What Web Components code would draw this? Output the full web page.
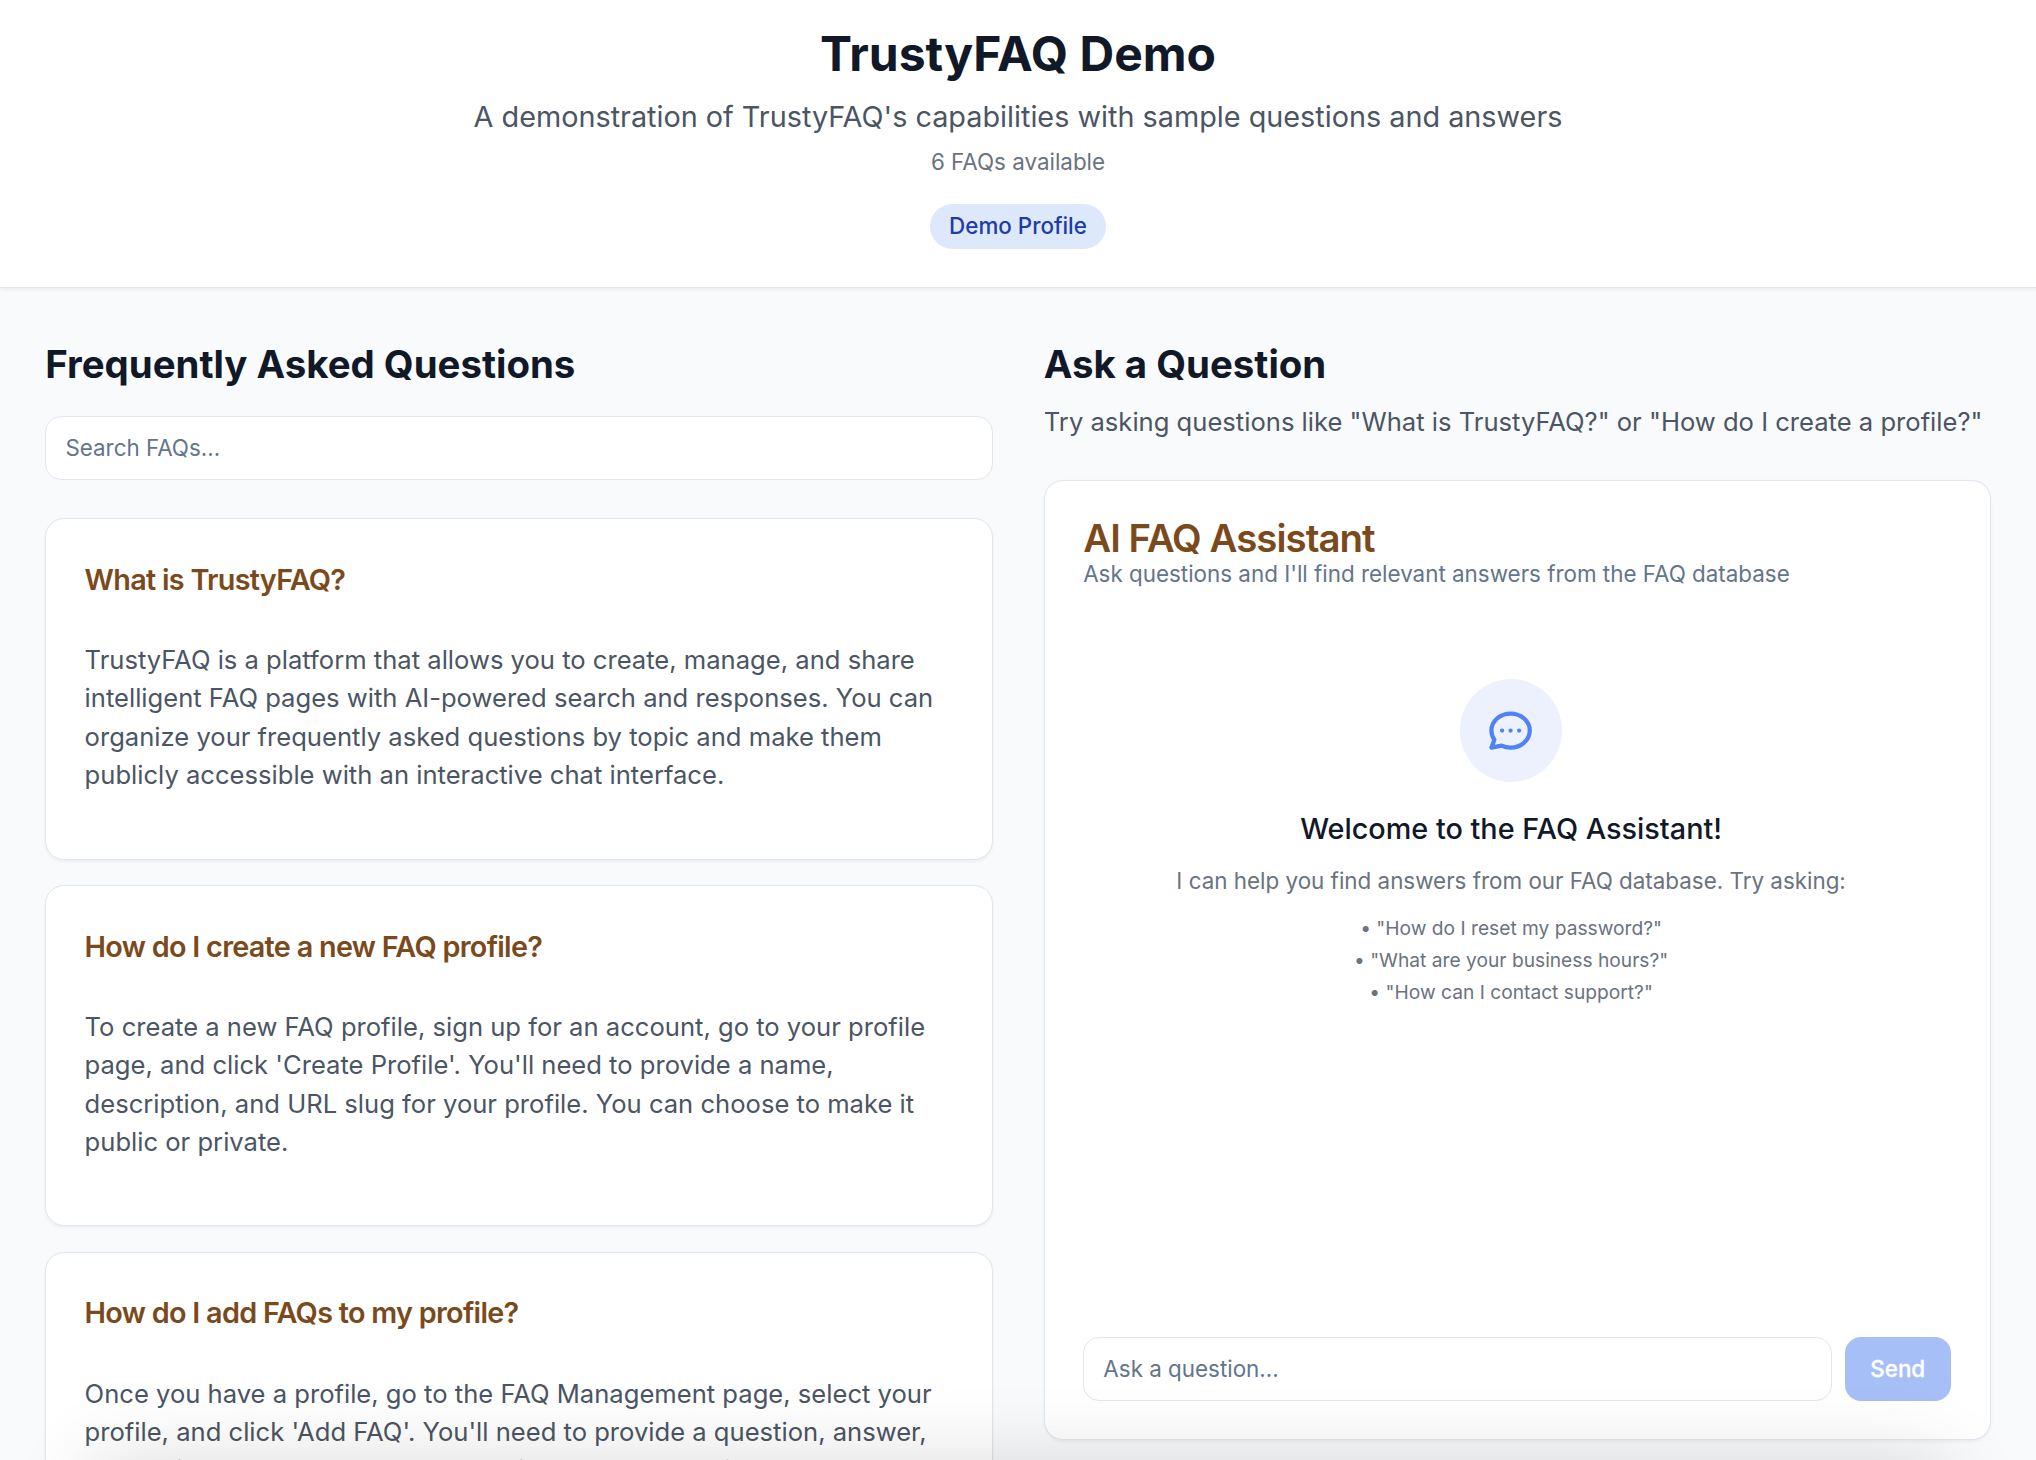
<!DOCTYPE html>
<html lang="en">
<head>
<meta charset="utf-8">
<title>TrustyFAQ Demo</title>
<style>
html{font-size:25.6px;height:100%;overflow:hidden}
body{margin:0;height:1460px;overflow:hidden;background:#f9fafc;font-family:Inter,"Liberation Sans",sans-serif;line-height:1.5;color:#111827;-webkit-font-smoothing:antialiased}
</style>
</head>
<body>
<faq-page></faq-page>
<script>
const define = (name, css, html) => customElements.define(name, class extends HTMLElement {
  constructor() {
    super();
    this.attachShadow({ mode: 'open' }).innerHTML =
      `<style>*{box-sizing:border-box}:host{box-sizing:border-box;display:block}h1,h2,h3,p,ul{margin:0;padding:0}${css}</style>${html}`;
  }
});

define('pill-badge',
  `:host{display:inline-flex;padding:.25rem .75rem;border-radius:99px;background:#dde8fb;color:#1f3ba8;font-size:.875rem;line-height:1.25rem;font-weight:500}`,
  `<slot></slot>`);

define('profile-header',
  `:host{display:flex;flex-direction:column;align-items:center;height:288px;padding-top:24.8px;background:#fff;border-bottom:1px solid #e1e4ed;box-shadow:0 1.6px 3.2px rgba(0,0,0,.05);text-align:center}
   h1{font-size:1.875rem;line-height:2.25rem;font-weight:700;color:#111827}
   .sub{margin-top:.5rem;font-size:1.125rem;line-height:1.75rem;color:#4b5563}
   .count{margin-top:.25rem;font-size:.875rem;line-height:1.25rem;color:#6b7280}
   pill-badge{margin-top:1rem}`,
  `<h1><slot name="title"></slot></h1><p class="sub"><slot name="subtitle"></slot></p><p class="count"><slot name="count"></slot></p><pill-badge><slot name="badge"></slot></pill-badge>`);

define('section-heading',
  `h2{font-size:1.5rem;line-height:2rem;font-weight:700;color:#111827}`,
  `<h2><slot></slot></h2>`);

define('text-field',
  `:host{display:flex;align-items:center;height:2.5rem;padding:1px .75rem 0;border:1px solid #e1e6ef;border-radius:16px;background:#fff;font-size:.875rem;line-height:1.25rem;color:#64748b}`,
  `<span><slot></slot></span>`);

define('surface-card',
  `:host{background:#fff;border:1px solid #e1e6ef;border-radius:19.2px;box-shadow:0 1.6px 3.2px rgba(0,0,0,.05)}`,
  `<slot></slot>`);

define('faq-item',
  `surface-card{padding:1.5rem;padding-bottom:2.5rem}
   h3{font-size:1.125rem;line-height:1.75rem;font-weight:600;letter-spacing:-.025em;color:#7b4a1c}
   p{margin-top:1.5rem;line-height:1.5rem;color:#4b5563}`,
  `<surface-card><h3><slot name="question"></slot></h3><p><slot></slot></p></surface-card>`);

define('chat-icon',
  `:host{display:flex;align-items:center;justify-content:center;width:4rem;height:4rem;border-radius:50%;background:#edf1fd;color:#4f83f3}
   svg{width:2rem;height:2rem}`,
  `<svg viewBox="0 0 24 24" fill="none" stroke="currentColor" stroke-width="2" stroke-linecap="round" stroke-linejoin="round"><path d="M8 12h.01M12 12h.01M16 12h.01M21 12c0 4.418-4.03 8-9 8a9.863 9.863 0 01-4.255-.949L3 20l1.395-3.72C3.512 15.042 3 13.574 3 12c0-4.418 4.03-8 9-8s9 3.582 9 8z"/></svg>`);

define('send-button',
  `:host{display:flex;align-items:center;justify-content:center;height:2.5rem;padding:0 1rem;border-radius:16px;background:#a7bff7;color:#fff;font-size:.875rem;line-height:1.25rem;font-weight:500;-webkit-text-stroke:.3px #fff}`,
  `<slot></slot>`);

define('faq-assistant',
  `surface-card{display:flex;flex-direction:column;height:960px;padding:1.5rem}
   h3{font-size:1.5rem;line-height:1;font-weight:600;letter-spacing:-.025em;color:#7b4a1c}
   .desc{font-size:.875rem;line-height:1.25rem;color:#64748b}
   .log{flex:1;margin-top:1.5rem;padding:2rem .5rem 0 0;display:flex;flex-direction:column;align-items:center;text-align:center}
   .welcome{margin-top:1rem;font-size:1.125rem;line-height:1.75rem;font-weight:500;color:#111827}
   .hint{margin-top:.5rem;font-size:.875rem;line-height:1.25rem;color:#6b7280}
   ul{list-style:none;margin-top:.75rem;display:flex;flex-direction:column;gap:.25rem;font-size:.75rem;line-height:1rem;color:#6b7280}
   .bar{display:flex;gap:.5rem;padding-right:1px}
   text-field{flex:1}`,
  `<surface-card>
     <h3>AI FAQ Assistant</h3>
     <p class="desc">Ask questions and I'll find relevant answers from the FAQ database</p>
     <div class="log">
       <chat-icon></chat-icon>
       <p class="welcome">Welcome to the FAQ Assistant!</p>
       <p class="hint">I can help you find answers from our FAQ database. Try asking:</p>
       <ul><li>• "How do I reset my password?"</li><li>• "What are your business hours?"</li><li>• "How can I contact support?"</li></ul>
     </div>
     <div class="bar"><text-field>Ask a question...</text-field><send-button>Send</send-button></div>
   </surface-card>`);

define('bottom-shade',
  `:host{position:absolute;left:0;right:0;bottom:0;height:120px;overflow:hidden;pointer-events:none}
   div{position:absolute;left:90px;right:90px;top:120px;height:200px;box-shadow:0 0 80px rgba(0,0,0,.14)}`,
  `<div></div>`);

define('faq-page',
  `:host{position:relative;height:1460px;overflow:hidden}
   main{display:grid;grid-template-columns:1fr 1fr;gap:2rem;padding:2rem 44.8px 0 45.2px;align-items:start}
   .search{margin:1rem 0 1.5rem}
   .list{display:flex;flex-direction:column;gap:1rem}
   .try{margin:.5rem 0 1.5rem;line-height:1.5rem;color:#4b5563;white-space:nowrap}
   section{min-width:0}`,
  `<profile-header>
     <span slot="title">TrustyFAQ Demo</span>
     <span slot="subtitle">A demonstration of TrustyFAQ's capabilities with sample questions and answers</span>
     <span slot="count">6 FAQs available</span>
     <span slot="badge">Demo Profile</span>
   </profile-header>
   <main>
     <section>
       <section-heading>Frequently Asked Questions</section-heading>
       <text-field class="search">Search FAQs...</text-field>
       <div class="list">
         <faq-item><span slot="question">What is TrustyFAQ?</span>TrustyFAQ is a platform that allows you to create, manage, and share intelligent FAQ pages with AI-powered search and responses. You can organize your frequently asked questions by topic and make them publicly accessible with an interactive chat interface.</faq-item>
         <faq-item><span slot="question">How do I create a new FAQ profile?</span>To create a new FAQ profile, sign up for an account, go to your profile page, and click 'Create Profile'. You'll need to provide a name, description, and URL slug for your profile. You can choose to make it public or private.</faq-item>
         <faq-item><span slot="question">How do I add FAQs to my profile?</span>Once you have a profile, go to the FAQ Management page, select your profile, and click 'Add FAQ'. You'll need to provide a question, answer, and optionally select or create a topic to better organize them for your visitors.</faq-item>
       </div>
     </section>
     <section>
       <section-heading>Ask a Question</section-heading>
       <p class="try">Try asking questions like "What is TrustyFAQ?" or "How do I create a profile?"</p>
       <faq-assistant></faq-assistant>
     </section>
   </main>
   <bottom-shade></bottom-shade>`);
</script>
</body>
</html>
